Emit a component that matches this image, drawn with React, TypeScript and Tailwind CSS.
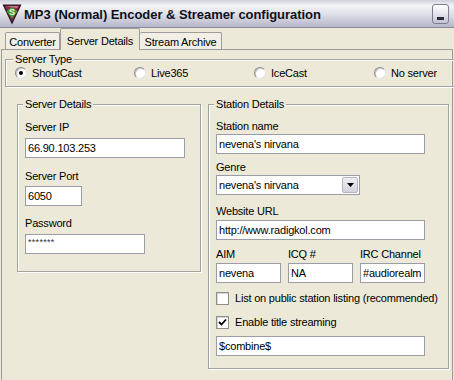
import React from 'react';

const Legend: React.FC<{ children: React.ReactNode }> = ({ children }) => (
  <legend className="ml-[-2px] bg-[#ECE9D8] px-[2px] leading-[13px]">{children}</legend>
);

const Label: React.FC<{ children: React.ReactNode; className?: string }> = ({ children, className = '' }) => (
  <div className={`leading-[13px] ${className}`}>{children}</div>
);

const TextBox: React.FC<{ value: string; className?: string }> = ({ value, className = '' }) => (
  <div
    className={`flex h-[20px] items-center overflow-hidden whitespace-nowrap border border-[#9a9ea4] bg-white pl-[2px] ${className}`}
  >
    {value}
  </div>
);

const Radio: React.FC<{ label: string; checked?: boolean; className?: string }> = ({ label, checked, className = '' }) => (
  <div className={`flex h-[14px] items-center gap-[5px] ${className}`}>
    <span className="flex h-[12px] w-[12px] items-center justify-center rounded-full border border-[#8a8a8a] border-b-[#e4e4e4] border-r-[#e4e4e4] bg-white shadow-[inset_1px_1px_0_#c8c8c8]">
      {checked && <span className="h-[4px] w-[4px] rounded-full bg-black" />}
    </span>
    <span>{label}</span>
  </div>
);

const Check: React.FC<{ label: string; checked?: boolean; className?: string }> = ({ label, checked, className = '' }) => (
  <div className={`flex h-[13px] items-center gap-[6px] ${className}`}>
    <span className="flex h-[13px] w-[13px] items-center justify-center border border-[#8e8e8e] bg-white shadow-[inset_1px_1px_0_#d6d6d6]">
      {checked && (
        <svg width="9" height="9" viewBox="0 0 9 9">
          <path d="M1 4 L3.5 6.5 L8 1.5" fill="none" stroke="#000" strokeWidth="1.8" />
        </svg>
      )}
    </span>
    <span>{label}</span>
  </div>
);

const Logo: React.FC = () => (
  <svg width="20" height="22" viewBox="0 0 20 22">
    <polygon points="0.5,1.5 19.5,1.5 10,21.5" fill="#2b1420" />
    <polygon points="2.5,2.8 17.5,2.8 10,18.5" fill="#8c2a4a" />
    <polygon points="3.5,3 16.5,3 15,5" fill="#d4738f" />
    <polygon points="10,3.5 15.5,8.5 10,15.5 4.5,8.5" fill="#3f9a3a" />
    <text x="10" y="11.5" textAnchor="middle" fontSize="9" fontWeight="bold" fill="#f4f4d0" fontFamily="Liberation Sans, Arial, sans-serif">
      S
    </text>
  </svg>
);

const App: React.FC = () => {
  return (
    <div className="flex h-[380px] w-[454px] flex-col overflow-hidden bg-[#ECE9D8] font-['Liberation_Sans',Arial,sans-serif] text-[11px] tracking-[-0.2px] text-black">
      {/* Title bar */}
      <div className="flex h-[28px] shrink-0 items-center border-b border-[#8a8aa0] bg-[linear-gradient(180deg,#cfcfdc_0%,#f3f3f7_20%,#dddde7_55%,#b6b6c9_100%)] pl-[2px] pr-[5px]">
        <Logo />
        <span className="ml-[2px] pt-[2px] text-[13px] font-bold tracking-[-0.05px] text-[#101018]">
          MP3 (Normal) Encoder &amp; Streamer configuration
        </span>
        <div className="ml-auto flex h-[20px] w-[17px] items-end justify-center rounded-[3px] border border-[#7c7c94] bg-[linear-gradient(180deg,#ffffff_0%,#e4e4ec_50%,#c2c2d2_100%)] pb-[3px]">
          <span className="h-[3px] w-[7px] bg-[#2a2a38]" />
        </div>
      </div>

      {/* Tabs */}
      <div className="flex h-[21px] shrink-0 items-end pl-[5px]">
        <div className="flex h-[17px] w-[55px] items-center justify-center rounded-t-[2px] border border-b-0 border-[#9c9c9c] bg-[#f1efe6] pt-[2px]">
          Converter
        </div>
        <div className="relative z-10 -mb-px flex h-[22px] w-[80px] items-start justify-center rounded-t-[2px] border border-b-0 border-[#9c9c9c] bg-[#ECE9D8] pt-[4px]">
          Server Details
        </div>
        <div className="flex h-[17px] w-[82px] items-center justify-center rounded-t-[2px] border border-b-0 border-l-0 border-[#9c9c9c] bg-[#f1efe6] pt-[2px]">
          Stream Archive
        </div>
      </div>

      {/* Tab page */}
      <div className="ml-px mr-px flex-1 border-l border-r border-t border-[#9a9a9a] pl-[3px]">
        <fieldset className="mt-[3px] w-[460px] border border-[#a3a39b] pb-[6px] pl-[9px] shadow-[1px_1px_0_#fff,inset_1px_1px_0_#fff]">
          <Legend>Server Type</Legend>
          <div className="flex">
            <Radio label="ShoutCast" checked className="w-[119px]" />
            <Radio label="Live365" className="w-[120px]" />
            <Radio label="IceCast" className="w-[120px]" />
            <Radio label="No server" className="w-[120px]" />
          </div>
        </fieldset>

        <div className="ml-[12px] mt-[11px] flex items-start gap-[7px]">
          {/* Server details */}
          <fieldset className="w-[184px] border border-[#a3a39b] pb-[17px] pl-[7px] shadow-[1px_1px_0_#fff,inset_1px_1px_0_#fff]">
            <Legend>Server Details</Legend>
            <Label className="mt-[10px]">Server IP</Label>
            <TextBox value="66.90.103.253" className="mt-[4px] w-[160px]" />
            <Label className="mt-[12px]">Server Port</Label>
            <TextBox value="6050" className="mt-[3px] w-[57px]" />
            <Label className="mt-[11px]">Password</Label>
            <TextBox value="*******" className="mt-[4px] w-[120px] items-start pt-[1px] text-[9px] tracking-[0.3px] text-[#333]" />
          </fieldset>

          {/* Station details */}
          <fieldset className="w-[241px] border border-[#a3a39b] pb-[12px] pl-[7px] shadow-[1px_1px_0_#fff,inset_1px_1px_0_#fff]">
            <Legend>Station Details</Legend>
            <Label className="mt-[9px]">Station name</Label>
            <TextBox value="nevena's nirvana" className="mt-[1px] w-[209px]" />
            <Label className="mt-[7px]">Genre</Label>
            <div className="mt-px flex h-[20px] w-[144px] items-center border border-[#9a9ea4] bg-white pl-[2px]">
              <span className="flex-1">nevena's nirvana</span>
              <span className="mr-px flex h-[16px] w-[16px] items-center justify-center rounded-[2px] border border-[#b4b4c4] bg-[linear-gradient(180deg,#eeeef4_0%,#d2d2de_100%)]">
                <svg width="7" height="4" viewBox="0 0 7 4">
                  <polygon points="0,0 7,0 3.5,4" fill="#000" />
                </svg>
              </span>
            </div>
            <Label className="mt-[10px]">Website URL</Label>
            <TextBox value="http://www.radigkol.com" className="mt-[2px] w-[209px]" />
            <div className="mt-[8px] flex gap-[7px]">
              <div className="w-[65px]">
                <Label>AIM</Label>
                <TextBox value="nevena" className="mt-[2px]" />
              </div>
              <div className="w-[65px]">
                <Label>ICQ #</Label>
                <TextBox value="NA" className="mt-[2px]" />
              </div>
              <div className="w-[65px]">
                <Label>IRC Channel</Label>
                <TextBox value="#audiorealm" className="mt-[2px]" />
              </div>
            </div>
            <Check label="List on public station listing (recommended)" className="mt-[9px]" />
            <Check label="Enable title streaming" checked className="mt-[11px]" />
            <TextBox value="$combine$" className="mt-[7px] w-[209px]" />
          </fieldset>
        </div>
      </div>
    </div>
  );
};

export default App;
